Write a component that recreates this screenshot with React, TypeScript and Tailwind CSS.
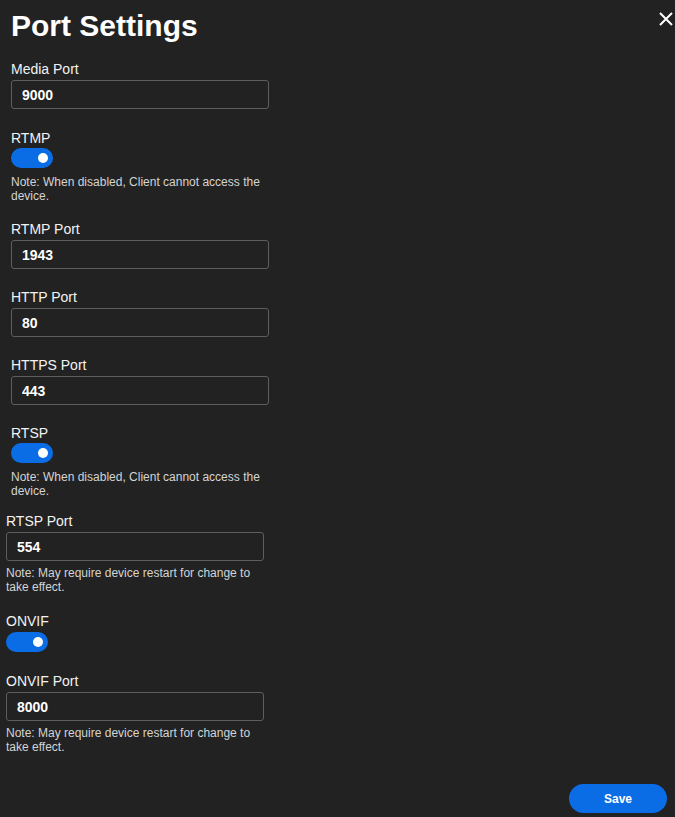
import { ReactNode } from 'react';

function Label({ children }: { children: ReactNode }) {
  return <div className="text-[14px] leading-[16px] text-[#f2f2f2]">{children}</div>;
}

function PortInput({ value }: { value: string }) {
  return (
    <input
      type="text"
      defaultValue={value}
      className="mt-[3px] block h-[29px] w-[258px] rounded-[3px] border border-[#5e5e5e] bg-[#222222] pl-[10px] text-[14px] font-bold text-white outline-none"
    />
  );
}

function Toggle({ className }: { className: string }) {
  return (
    <div className={`relative h-[20px] w-[42px] rounded-full bg-[#0b6de6] ${className}`}>
      <div className="absolute right-[5px] top-[5px] h-[10px] w-[10px] rounded-full bg-white" />
    </div>
  );
}

function Note({ children }: { children: ReactNode }) {
  return <p className="w-[258px] text-[12px] leading-[14px] text-[#d4d4d4]">{children}</p>;
}

export default function App() {
  return (
    <div
      className="relative min-h-[817px] w-full bg-[#222222] text-white"
      style={{ fontFamily: '"Liberation Sans", Arial, sans-serif' }}
    >
      <button className="absolute right-[1px] top-[11px] p-0 text-white">
        <svg width="16" height="16" viewBox="0 0 16 16" fill="none" stroke="currentColor" strokeWidth="2">
          <path d="M2 2 L14 14 M14 2 L2 14" />
        </svg>
      </button>

      <div className="pt-[8px]">
        <div className="pl-[11px]">
          <h1 className="text-[30px] font-bold leading-[36px]">Port Settings</h1>

          <div className="mt-[17px]">
            <Label>Media Port</Label>
            <PortInput value="9000" />
          </div>

          <div className="mt-[21px]">
            <Label>RTMP</Label>
            <Toggle className="mt-[2px]" />
            <div className="mt-[7px]">
              <Note>Note: When disabled, Client cannot access the device.</Note>
            </div>
          </div>

          <div className="mt-[18px]">
            <Label>RTMP Port</Label>
            <PortInput value="1943" />
          </div>

          <div className="mt-[20px]">
            <Label>HTTP Port</Label>
            <PortInput value="80" />
          </div>

          <div className="mt-[20px]">
            <Label>HTTPS Port</Label>
            <PortInput value="443" />
          </div>

          <div className="mt-[20px]">
            <Label>RTSP</Label>
            <Toggle className="mt-[2px]" />
            <div className="mt-[7px]">
              <Note>Note: When disabled, Client cannot access the device.</Note>
            </div>
          </div>
        </div>

        <div className="pl-[6px]">
          <div className="mt-[15px]">
            <Label>RTSP Port</Label>
            <PortInput value="554" />
            <div className="mt-[5px]">
              <Note>Note: May require device restart for change to take effect.</Note>
            </div>
          </div>

          <div className="mt-[19px]">
            <Label>ONVIF</Label>
            <Toggle className="mt-[3px]" />
          </div>

          <div className="mt-[21px]">
            <Label>ONVIF Port</Label>
            <PortInput value="8000" />
            <div className="mt-[5px]">
              <Note>Note: May require device restart for change to take effect.</Note>
            </div>
          </div>
        </div>

        <div className="mt-[30px] flex justify-end pr-[8px]">
          <button className="h-[29px] w-[98px] rounded-full bg-[#0b6de6] text-[12px] font-bold text-white">
            Save
          </button>
        </div>
      </div>
    </div>
  );
}
